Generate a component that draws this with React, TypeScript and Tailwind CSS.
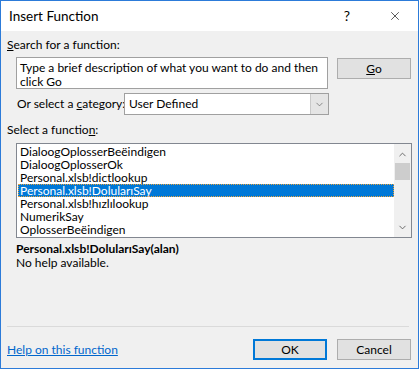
import { ChevronDown, ChevronUp, X } from 'lucide-react';

const FUNCTIONS = [
  'DialoogOplosserBeëindigen',
  'DialoogOplosserOk',
  'Personal.xlsb!dictlookup',
  'Personal.xlsb!DolularıSay',
  'Personal.xlsb!hızlılookup',
  'NumerikSay',
  'OplosserBeëindigen',
];
const SELECTED = 3;

function Button({ label, accel, primary }: { label: string; accel?: number; primary?: boolean }) {
  const before = accel === undefined ? label : label.slice(0, accel);
  const key = accel === undefined ? '' : label[accel];
  const after = accel === undefined ? '' : label.slice(accel + 1);
  return (
    <div
      className={
        primary
          ? 'w-[74px] h-[21px] flex items-center justify-center bg-[#e1e1e1] border-2 border-[#0078d7] text-black'
          : 'w-[74px] h-[21px] flex items-center justify-center bg-[#e1e1e1] border border-[#adadad] text-black'
      }
    >
      <span>
        {before}
        {key && <span className="underline">{key}</span>}
        {after}
      </span>
    </div>
  );
}

export default function App() {
  return (
    <div className="w-[419px] h-[369px] border border-[#2c7bd9] bg-[#f0f0f0] flex flex-col text-[12px] leading-[14px] text-black font-['Lato',sans-serif]">
      {/* title bar */}
      <div className="h-[30px] bg-white flex items-center pl-[8px]">
        <span className="flex-1 text-[13.5px]">Insert Function</span>
        <span className="w-[10px] text-center mr-[36px] text-[14px]">?</span>
        <X size={14} strokeWidth={1.1} className="mr-[16px] text-black" />
      </div>

      <div className="flex flex-col px-[6px]">
        <div className="mt-[7px]">
          <span className="underline">S</span>earch for a function:
        </div>

        <div className="flex items-start mt-[5px] pl-[9px]">
          <div className="w-[312px] h-[32px] bg-white border border-[#a0a0a0] px-[3px] pt-[3px] leading-[14px]">
            Type a brief description of what you want to do and then click Go
          </div>
          <div className="ml-[9px] mt-[1px]">
            <Button label="Go" accel={0} />
          </div>
        </div>

        <div className="flex items-center mt-[4px] pl-[10px]">
          <span className="w-[107px] whitespace-nowrap">
            Or select a <span className="underline">c</span>ategory:
          </span>
          <div className="w-[205px] h-[22px] bg-white border border-[#a0a0a0] flex items-center">
            <span className="flex-1 pl-[4px]">User Defined</span>
            <div className="w-[18px] h-full bg-[#e5e5e5] border-l border-[#c9c9c9] flex items-center justify-center">
              <ChevronDown size={11} strokeWidth={1.5} className="text-[#606060]" />
            </div>
          </div>
        </div>

        <div className="mt-[8px]">
          Select a functio<span className="underline">n</span>:
        </div>

        <div className="ml-[9px] mt-[6px] w-[396px] h-[95px] bg-white border border-[#828790] flex">
          <div className="flex-1 flex flex-col pt-[1px]">
            {FUNCTIONS.map((f, i) => (
              <div
                key={f}
                className={
                  i === SELECTED
                    ? 'h-[13px] leading-[13px] ml-[1px] pl-[2px] bg-[#0078d7] text-white outline outline-1 outline-dotted outline-[#e8a33d] -outline-offset-1'
                    : 'h-[13px] leading-[13px] pl-[3px]'
                }
              >
                {f}
              </div>
            ))}
          </div>
          <div className="w-[17px] h-full bg-[#f0f0f0] flex flex-col items-center">
            <ChevronUp size={11} strokeWidth={2} className="text-[#606060] mt-[5px]" />
            <div className="w-[15px] h-[17px] bg-[#cdcdcd] mt-[3px]" />
            <div className="flex-1" />
            <ChevronDown size={11} strokeWidth={2} className="text-[#606060] mb-[4px]" />
          </div>
        </div>

        <div className="ml-[9px] mt-[4px] font-bold">Personal.xlsb!DolularıSay(alan)</div>
        <div className="ml-[9px]">No help available.</div>

        <div className="mt-[56px] h-px bg-[#dadada] mr-[3px]" />

        <div className="flex items-center mt-[12px]">
          <span className="flex-1 text-[#0066cc] underline">Help on this function</span>
          <Button label="OK" primary />
          <div className="ml-[10px] mr-[1px]">
            <Button label="Cancel" />
          </div>
        </div>
      </div>
    </div>
  );
}
